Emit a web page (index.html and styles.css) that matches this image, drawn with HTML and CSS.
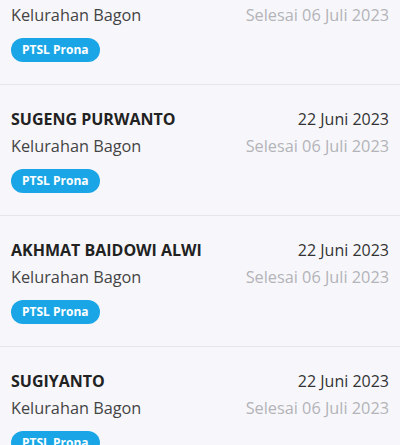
FILE: index.html
```html
<!DOCTYPE html>
<html lang="id">
<head>
    <meta charset="UTF-8">
    <title>Daftar Berkas</title>
    <link rel="stylesheet" href="styles.css">
</head>
<body>
<div class="list">
    <div class="item">
        <div class="row">
            <span class="name">MUHAMMAD SOLEH</span>
            <span class="date">22 Juni 2023</span>
        </div>
        <div class="row">
            <span class="place">Kelurahan Bagon</span>
            <span class="done">Selesai 06 Juli 2023</span>
        </div>
        <span class="badge">PTSL Prona</span>
    </div>
    <div class="item">
        <div class="row">
            <span class="name">SUGENG PURWANTO</span>
            <span class="date">22 Juni 2023</span>
        </div>
        <div class="row">
            <span class="place">Kelurahan Bagon</span>
            <span class="done">Selesai 06 Juli 2023</span>
        </div>
        <span class="badge">PTSL Prona</span>
    </div>
    <div class="item">
        <div class="row">
            <span class="name">AKHMAT BAIDOWI ALWI</span>
            <span class="date">22 Juni 2023</span>
        </div>
        <div class="row">
            <span class="place">Kelurahan Bagon</span>
            <span class="done">Selesai 06 Juli 2023</span>
        </div>
        <span class="badge">PTSL Prona</span>
    </div>
    <div class="item">
        <div class="row">
            <span class="name">SUGIYANTO</span>
            <span class="date">22 Juni 2023</span>
        </div>
        <div class="row">
            <span class="place">Kelurahan Bagon</span>
            <span class="done">Selesai 06 Juli 2023</span>
        </div>
        <span class="badge">PTSL Prona</span>
    </div>
</div>
</body>
</html>
```
FILE: styles.css
```css
body {
    margin: 0;
    background-color: #f7f7fb;
    font-family: "Open Sans", sans-serif;
    color: #333;
    overflow: hidden;
}

/* list is scrolled: first item is cut at the top */
.list {
    margin-top: -46px;
}

.item {
    display: flex;
    flex-direction: column;
    align-items: flex-start;
    padding: 21px 11px 22px 11px;
    border-bottom: 1px solid #e6e6ea;
}

.row {
    display: flex;
    justify-content: space-between;
    align-items: baseline;
    width: 100%;
    line-height: 27px;
}

.name {
    font-size: 16px;
    font-weight: 700;
    color: #222;
}

.date {
    font-size: 16px;
    color: #333;
}

.place {
    font-size: 16.3px;
    color: #444;
}

.done {
    font-size: 16.3px;
    color: #b3b3b8;
}

.badge {
    margin-top: 9px;
    height: 24px;
    line-height: 24px;
    padding: 0 11px;
    border-radius: 12px;
    background-color: #1aa6e6;
    color: #fff;
    font-size: 12px;
    font-weight: 700;
}
```
